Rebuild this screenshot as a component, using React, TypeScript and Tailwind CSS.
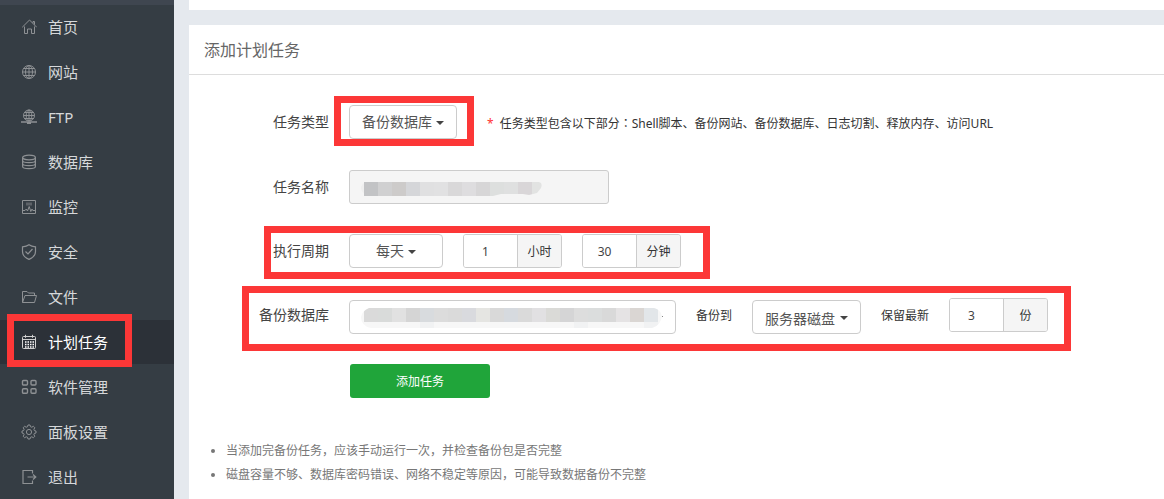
import type { ReactNode } from "react";

const stroke = { fill: "none", stroke: "currentColor", strokeWidth: 1 };

const icons: Record<string, ReactNode> = {
  home: (
    <g {...stroke}>
      <path d="M1.200 8.300 8.500 1l7.300 7.300M12 4.200V2.500h1.500v3.200M3.500 7.500v7h3v-4.500h4v4.500h3v-7" />
    </g>
  ),
  globe: (
    <g {...stroke}>
      <circle cx="8" cy="8" r="6.500" />
      <ellipse cx="8" cy="8" rx="3.500" ry="6.500" />
      <path d="M8 1.500v13M1.500 8h13M2.500 4.500h11M2.500 11.500h11" />
    </g>
  ),
  ftp: (
    <g {...stroke}>
      <circle cx="8" cy="6.500" r="5.500" />
      <ellipse cx="8" cy="6.500" rx="2.800" ry="5.500" />
      <path d="M8 1v11M2.500 6.500h11M3.500 3.500h9M3.500 9.500h9" />
      <path d="M0 13h16" strokeWidth="1.500" />
      <path d="M6 14h4" strokeWidth="2" />
    </g>
  ),
  database: (
    <g {...stroke} strokeWidth="1.200">
      <ellipse cx="8" cy="3.500" rx="6.400" ry="2.300" />
      <path d="M1.600 3.500v9c0 1.200 2.800 2.200 6.400 2.200s6.400-1 6.400-2.200v-9M1.600 6.500c0 1.200 2.800 2.200 6.400 2.200s6.400-1 6.400-2.200M1.600 9.500c0 1.200 2.800 2.200 6.400 2.200s6.400-1 6.400-2.200" />
    </g>
  ),
  monitor: (
    <g {...stroke}>
      <path d="M1.500 1.500h13v13h-13z" />
      <path d="M5 5h6" opacity="0.450" strokeWidth="3" />
      <path d="M2 11.500h2l1.300-1.500L6.500 12l1.700-4.500 1.600 5 1.200-2.500.8 1.500H14" />
    </g>
  ),
  shield: (
    <g {...stroke} strokeWidth="1.200">
      <path d="M8 0.800c2 1.500 4.200 1.900 6.500 2v4.700c0 4-2.700 6.300-6.500 7.900C4.200 13.800 1.500 11.500 1.500 7.500V2.800c2.300-.1 4.500-.5 6.500-2z" />
      <path d="m4.500 7.500 2.500 2.500 4.500-5" />
    </g>
  ),
  folder: (
    <g {...stroke}>
      <path d="M1.500 13.500v-11h4.500l1.500 1.500h6v2.500M1.500 13.500 4 6.500h11.500l-2 7z" />
    </g>
  ),
  calendar: (
    <g {...stroke}>
      <rect x="1.500" y="2.500" width="13" height="12" rx="1" />
      <path d="M1.500 5.500h13M4.500 0.800v3M11.500 0.800v3" />
      <path d="M4 8h9M4 10.500h9M4 13h9" stroke="#fff" strokeWidth="1.500" strokeDasharray="1.500 1" />
    </g>
  ),
  apps: (
    <g {...stroke} strokeWidth="1.400">
      <rect x="1.500" y="1.500" width="5" height="4.500" rx="1" />
      <rect x="10" y="1.500" width="5" height="4.500" rx="1" />
      <rect x="1.500" y="9.700" width="5" height="4.500" rx="1" />
      <rect x="10" y="9.700" width="5" height="4.500" rx="1" />
    </g>
  ),
  gear: (
    <g {...stroke}>
      <path d="M7 1h2l.5 1.700 1.300.5 1.600-.9 1.400 1.400-.9 1.600.5 1.300 1.600.4v2l-1.600.4-.5 1.300.9 1.600-1.400 1.400-1.600-.9-1.300.5L9 15H7l-.5-1.700-1.300-.5-1.600.9-1.400-1.400.9-1.600-.5-1.300L1 9V7l1.600-.4.5-1.300-.9-1.600 1.400-1.400 1.600.9 1.300-.5z" />
      <circle cx="8" cy="8" r="2.600" />
    </g>
  ),
  exit: (
    <g {...stroke} strokeWidth="1.200">
      <path d="M11.500 4.500v-3h-9.500v13h9.500v-3M6.500 8h8.500M12 5.500 14.800 8 12 10.500" />
    </g>
  ),
};

const menu = [
  { label: "首页", icon: "home" },
  { label: "网站", icon: "globe" },
  { label: "FTP", icon: "ftp" },
  { label: "数据库", icon: "database" },
  { label: "监控", icon: "monitor" },
  { label: "安全", icon: "shield" },
  { label: "文件", icon: "folder" },
  { label: "计划任务", icon: "calendar", active: true },
  { label: "软件管理", icon: "apps" },
  { label: "面板设置", icon: "gear" },
  { label: "退出", icon: "exit" },
];

function Marker({ className }: { className: string }) {
  return (
    <span
      aria-hidden="true"
      className={`pointer-events-none absolute border-[7px] border-[#fc3737] ${className}`}
    />
  );
}

function Sidebar() {
  return (
    <nav className="w-[174px] shrink-0 border-t-[5px] border-[#3f4650] bg-[#353d44]">
      <ul className="flex flex-col gap-px">
        {menu.map((item) => (
          <li key={item.label} className="relative">
            <a
              href="#"
              aria-current={item.active ? "page" : undefined}
              className={`flex h-11 items-center gap-[11px] pl-[21px] text-[15px] ${
                item.active ? "bg-[#2c3138] text-white" : "text-[#d6d8da]"
              }`}
            >
              <svg
                viewBox="0 0 16 16"
                aria-hidden="true"
                className={`size-4 ${item.active ? "text-[#d0d0d0]" : "text-[#8e9194]"}`}
              >
                {icons[item.icon]}
              </svg>
              {item.label}
            </a>
            {item.active && <Marker className="top-[-6px] left-[7px] h-[53px] w-[125px]" />}
          </li>
        ))}
      </ul>
    </nav>
  );
}

function Picker({ id, value, className }: { id: string; value: string; className: string }) {
  return (
    <div className="relative flex">
      <select
        id={id}
        className={`h-[34px] appearance-none rounded border border-[#ccc] bg-white pb-0.5 text-[14px] text-[#555] ${className}`}
      >
        <option>{value}</option>
      </select>
      <svg
        viewBox="0 0 8 4"
        aria-hidden="true"
        className={`pointer-events-none absolute top-4 h-1 w-2 text-[#444] ${
          id === "cycle" ? "right-[27px]" : "right-[13px]"
        }`}
      >
        <path d="M0 0h8L4 4z" fill="currentColor" />
      </svg>
    </div>
  );
}

function NumberGroup({ id, label, value, unit }: { id: string; label?: string; value: string; unit: string }) {
  return (
    <div className="flex h-[34px] w-[99px] overflow-hidden rounded-[3px] border border-[#ccc] text-[12px]">
      <input
        id={id}
        aria-label={label ?? unit}
        inputMode="numeric"
        defaultValue={value}
        className="w-[53px] border-0 bg-white pt-0.5 pr-2.5 text-center text-[#444]"
      />
      <span className="flex flex-1 items-center justify-center border-l border-[#ccc] bg-[#f5f5f5] pt-0.5 text-[#333]">
        {unit}
      </span>
    </div>
  );
}

function Row({ label, htmlFor, className = "", children }: { label: string; htmlFor: string; className?: string; children: ReactNode }) {
  return (
    <div className={`relative flex items-start gap-5 ${className}`}>
      <label htmlFor={htmlFor} className="w-[140px] shrink-0 text-right text-[14px] leading-[34px] text-[#444]">
        {label}
      </label>
      {children}
    </div>
  );
}

const nameTiles = ["#c2c3c5", "#d0d0d1", "#cdcbca", "#d5d6d9", "#e0e0e1", "#e1e1e2", "#d9d8d9", "#dedddf", "#d7d6d7", "#dddfde", "#dfe0e0", "#d9d6d8", "#e2e3e2"];
const databaseTiles = ["#dadada", "#d9dbda", "#e1e1e1", "#d5d5d5", "#d8dbde", "#dcdcdc", "#dadada", "#d9dade", "#e5e5e2", "#d9d9d9", "#d6dadf", "#dadada", "#e1e0e2", "#dadad7", "#d5d5d6", "#dddddd", "#dbdddd", "#d9d9d9", "#e5e3e4", "#dad6d3", "#e2e6e9"];

function NameMosaic() {
  return (
    <svg viewBox="0 0 184 20" aria-hidden="true" className="pointer-events-none absolute top-2 left-3 h-5 w-[184px]">
      <clipPath id="name-shape">
        <path d="M3 4h175q4 1 2 6l-4 5-8 2-6-1h-22l-8 2H3z" />
      </clipPath>
      <path d="M5 4Q0 6 0 10t5 7z" fill="#efefef" />
      <g clipPath="url(#name-shape)">
        {nameTiles.map((fill, i) => (
          <rect key={i} x={3 + i * 14} y="4" width="14" height="14" fill={fill} />
        ))}
      </g>
    </svg>
  );
}

function DatabaseMosaic() {
  return (
    <svg viewBox="0 0 304 20" aria-hidden="true" className="pointer-events-none absolute top-2 left-3 h-5 w-[304px]">
      <clipPath id="database-shape">
        <path d="M8 0h285q6 1 8 8-1 9-10 12H10Q0 18 0 9q1-6 8-9z" />
      </clipPath>
      <g clipPath="url(#database-shape)">
        <rect width="304" height="20" fill="#f7f7f7" />
        {databaseTiles.map((fill, i) => (
          <rect key={i} x={3 + i * 14} y="0" width="14" height="14" fill={fill} />
        ))}
        <path d="M59 14h14v6H59zM213 14h14v6h-14zM283 14h14v6h-14z" fill="#f1f2f3" />
      </g>
      <path d="M301 8h1v1h-1z" fill="#888" />
    </svg>
  );
}

export default function App() {
  return (
    <div className="flex min-h-screen bg-[#e5e9ee] font-['Noto_Sans','Noto_Sans_CJK_SC',sans-serif]">
      <Sidebar />
      <main className="ml-[15px] flex min-w-0 flex-1 flex-col gap-[15px] overflow-hidden">
        <div className="h-2.5 bg-white" />
        <section className="flex-1 bg-white">
          <h1 className="h-[50px] border-b border-[#ddd] pl-[15px] text-[16px] leading-[51px] text-[#666]">
            添加计划任务
          </h1>
          <form className="flex flex-col gap-[30px] pt-[30px]" onSubmit={(e) => e.preventDefault()}>
            <Row label="任务类型" htmlFor="type" className="h-[35px]">
              <Picker id="type" value="备份数据库" className="w-[108px] pl-3" />
              <p className="pl-2.5 text-[12px] leading-[36px] whitespace-nowrap text-[#333]">
                <span className="mr-1.5 text-[#f33]">*</span>
                任务类型包含以下部分<span className="font-['Noto_Sans_CJK_JP',sans-serif]">：</span>Shell脚本、备份网站、备份数据库、日志切割、释放内存、访问URL
              </p>
              <Marker className="top-[-9px] left-[145px] h-[50px] w-[140px]" />
            </Row>
            <Row label="任务名称" htmlFor="name">
              <div className="relative flex">
                <input id="name" disabled className="h-[34px] w-[260px] rounded-[3px] border border-[#ccc] bg-[#f5f5f5] px-3" />
                <NameMosaic />
              </div>
            </Row>
            <Row label="执行周期" htmlFor="cycle">
              <Picker id="cycle" value="每天" className="w-[94px] pl-[26px]" />
              <NumberGroup id="hour" value="1" unit="小时" />
              <NumberGroup id="minute" value="30" unit="分钟" />
              <Marker className="top-[-8px] left-[75px] h-[53px] w-[446px]" />
            </Row>
            <Row label="备份数据库" htmlFor="database" className="text-[12px] leading-[36px] text-[#333]">
              <div className="relative mt-0.5 flex">
                <input id="database" className="h-[34px] w-[327px] rounded border border-[#ccc] bg-white px-3" />
                <DatabaseMosaic />
              </div>
              <label htmlFor="target" className="shrink-0">备份到</label>
              <div className="mt-0.5">
                <Picker id="target" value="服务器磁盘" className="w-[109px] pl-3" />
              </div>
              <label htmlFor="keep" className="shrink-0">保留最新</label>
              <NumberGroup id="keep" label="保留最新" value="3" unit="份" />
              <Marker className="top-[-12px] left-[53px] h-[65px] w-[829px]" />
            </Row>
            <button type="submit" className="ml-[161px] h-[34px] w-[140px] rounded-[3px] bg-[#20a53a] pt-0.5 text-[12px] text-white">
              添加任务
            </button>
          </form>
          <ul className="mt-[41px] list-disc pl-[37px] text-[12px] leading-6 text-[#777]">
            <li>当添加完备份任务，应该手动运行一次，并检查备份包是否完整</li>
            <li>磁盘容量不够、数据库密码错误、网络不稳定等原因，可能导致数据备份不完整</li>
          </ul>
        </section>
      </main>
    </div>
  );
}
